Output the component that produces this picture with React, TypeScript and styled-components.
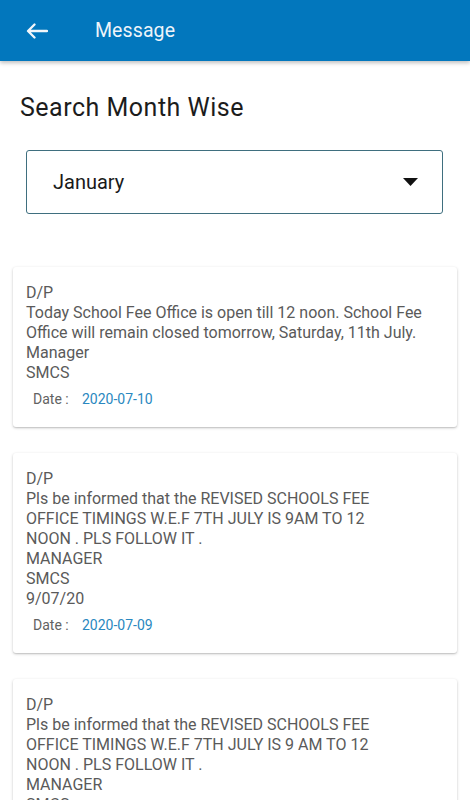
import React from "react";
import styled, { createGlobalStyle } from "styled-components";

const GlobalStyle = createGlobalStyle`
  html, body { margin: 0; padding: 0; background: #ffffff; }
  body { font-family: Roboto, "Noto Sans", "Liberation Sans", sans-serif; -webkit-font-smoothing: antialiased; }
  * { box-sizing: border-box; }
`;

const Page = styled.div`
  width: 470px;
  min-height: 800px;
  height: 800px;
  overflow: hidden;
  background: #ffffff;
  display: flex;
  flex-direction: column;
`;

const AppBar = styled.header`
  height: 61px;
  flex: 0 0 61px;
  background: #0277bd;
  display: flex;
  align-items: center;
  padding-left: 26px;
  box-shadow: 0 2px 4px rgba(0, 0, 0, 0.25);
  position: relative;
  z-index: 1;
`;

const BackButton = styled.button`
  border: 0;
  background: transparent;
  padding: 0;
  width: 22px;
  height: 22px;
  display: flex;
  align-items: center;
  justify-content: center;
  margin-right: 47px;
`;

const Title = styled.h1`
  margin: 0;
  font-size: 19.5px;
  font-weight: 400;
  color: #eef4fa;
  letter-spacing: 0.1px;
`;

const Content = styled.main`
  display: flex;
  flex-direction: column;
`;

const Heading = styled.h2`
  margin: 33px 0 0 20px;
  font-size: 25px;
  line-height: 28px;
  font-weight: 400;
  letter-spacing: 0.5px;
  color: #1c1c1c;
`;

const Select = styled.div`
  margin: 28px 27px 0 26px;
  height: 64px;
  border: 1px solid #3f6f7f;
  border-radius: 3px;
  display: flex;
  align-items: center;
  justify-content: space-between;
  padding: 0 24px 0 26px;
`;

const SelectValue = styled.span`
  font-size: 20px;
  color: #1a1a1a;
`;

const List = styled.div`
  display: flex;
  flex-direction: column;
  gap: 26px;
  padding: 53px 13px 0 13px;
`;

const Card = styled.article`
  background: #ffffff;
  border-radius: 3px;
  box-shadow: 0 1px 3px rgba(0, 0, 0, 0.22), 0 1px 1px rgba(0, 0, 0, 0.08);
  padding: 16px 13px 18px 13px;
  display: flex;
  flex-direction: column;
`;

const Body = styled.p`
  margin: 0;
  font-size: 16px;
  line-height: 20px;
  color: #5a5a5a;
  white-space: pre-line;
`;

const DateRow = styled.div`
  margin-top: 6px;
  padding-left: 7px;
  display: flex;
  font-size: 14px;
  line-height: 20px;
`;

const DateLabel = styled.span`
  color: #626262;
  width: 49px;
`;

const DateValue = styled.span`
  color: #2a88c0;
`;

const messages = [
  {
    body: "D/P\nToday School Fee Office is open till 12 noon. School Fee Office will remain closed tomorrow, Saturday, 11th July.\nManager\nSMCS",
    date: "2020-07-10",
  },
  {
    body: "D/P\nPls be informed that the REVISED SCHOOLS FEE\nOFFICE TIMINGS W.E.F 7TH JULY IS 9AM TO 12\nNOON . PLS FOLLOW IT .\nMANAGER\nSMCS\n9/07/20",
    date: "2020-07-09",
  },
  {
    body: "D/P\nPls be informed that the REVISED SCHOOLS FEE\nOFFICE TIMINGS W.E.F 7TH JULY IS 9 AM TO 12\nNOON . PLS FOLLOW IT .\nMANAGER\nSMCS\n9/07/20",
    date: "2020-07-08",
  },
];

export default function App() {
  return (
    <Page>
      <GlobalStyle />
      <AppBar>
        <BackButton aria-label="Back">
          <svg width="22" height="16" viewBox="0 0 22 16" fill="none">
            <path
              d="M21 8H2.2M8.5 1.5L2 8l6.5 6.5"
              stroke="#f2f6fa"
              strokeWidth="2.3"
              strokeLinecap="round"
              strokeLinejoin="round"
            />
          </svg>
        </BackButton>
        <Title>Message</Title>
      </AppBar>
      <Content>
        <Heading>Search Month Wise</Heading>
        <Select>
          <SelectValue>January</SelectValue>
          <svg width="15" height="8" viewBox="0 0 15 8">
            <polygon points="0,0 15,0 7.5,8" fill="#111" />
          </svg>
        </Select>
        <List>
          {messages.map((m, i) => (
            <Card key={i}>
              <Body>{m.body}</Body>
              <DateRow>
                <DateLabel>Date :</DateLabel>
                <DateValue>{m.date}</DateValue>
              </DateRow>
            </Card>
          ))}
        </List>
      </Content>
    </Page>
  );
}
